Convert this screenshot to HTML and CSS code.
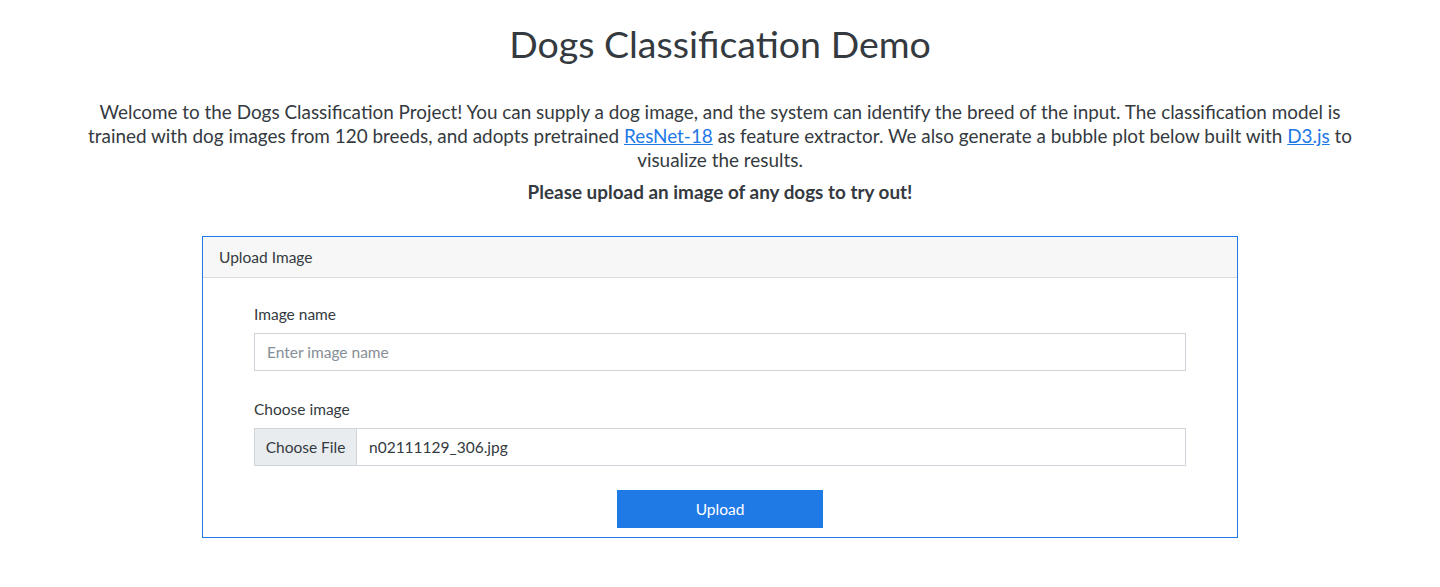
FILE: index.html
```html
<!DOCTYPE html>
<html lang="en">
<head>
<meta charset="utf-8">
<title>Dogs Classification Demo</title>
<link rel="stylesheet" href="styles.css">
</head>
<body>
<main class="page">
  <h1 class="title">Dogs Classification Demo</h1>
  <p class="intro">Welcome to the Dogs Classification Project! You can supply a dog image, and the system can identify the breed of the input. The classification model is trained with dog images from 120 breeds, and adopts pretrained <a href="#">ResNet-18</a> as feature extractor. We also generate a bubble plot below built with <a href="#">D3.js</a> to visualize the results.</p>
  <p class="cta">Please upload an image of any dogs to try out!</p>
  <section class="card">
    <div class="card-header">Upload Image</div>
    <form class="card-body">
      <div class="field">
        <label class="label">Image name</label>
        <input class="text-input" type="text" placeholder="Enter image name">
      </div>
      <div class="field">
        <label class="label">Choose image</label>
        <div class="file-input">
          <span class="file-btn">Choose File</span>
          <span class="file-name">n02111129_306.jpg</span>
        </div>
      </div>
      <div class="actions">
        <button class="upload-btn" type="button">Upload</button>
      </div>
    </form>
  </section>
</main>
</body>
</html>
```
FILE: styles.css
```css
* { box-sizing: border-box; }
html, body { margin: 0; padding: 0; background: #fff; }
body {
  font-family: "Lato", "Liberation Sans", sans-serif;
  color: #343a40;
}
.page {
  display: flex;
  flex-direction: column;
  align-items: center;
  padding-top: 19px;
}
.title {
  margin: 0;
  font-size: 37.5px;
  font-weight: 400;
  line-height: 50px;
  color: #343a40;
}
.intro {
  margin: 31px 0 0;
  width: 1276px;
  text-align: center;
  font-size: 18.9px;
  line-height: 24px;
}
.intro a { color: #1e78e6; }
.cta {
  margin: 8px 0 0;
  font-size: 18.9px;
  font-weight: 700;
  line-height: 24px;
}
.card {
  margin-top: 32px;
  width: 1036px;
  border: 1px solid #1e7be6;
}
.card-header {
  height: 41px;
  padding: 0 16px;
  display: flex;
  align-items: center;
  background: #f7f7f7;
  border-bottom: 1px solid #dcdcdc;
  font-size: 15.5px;
}
.card-body {
  padding: 26px 51px 9px;
  display: flex;
  flex-direction: column;
}
.field { display: flex; flex-direction: column; margin-bottom: 28px; }
.label { font-size: 15.5px; line-height: 20px; margin-bottom: 9px; }
.text-input {
  height: 38px;
  border: 1px solid #ced4da;
  padding: 0 12px;
  font-family: inherit;
  font-size: 15.5px;
  color: #343a40;
  outline: none;
}
.text-input::placeholder { color: #868e96; }
.file-input {
  height: 38px;
  border: 1px solid #ced4da;
  display: flex;
  align-items: stretch;
  font-size: 15.5px;
}
.file-btn {
  width: 102px;
  background: #e9ecef;
  border-right: 1px solid #ced4da;
  display: flex;
  align-items: center;
  justify-content: center;
}
.file-name { display: flex; align-items: center; padding-left: 12px; }
.actions { display: flex; justify-content: center; margin-top: -4px; }
.upload-btn {
  width: 206px;
  height: 38px;
  border: none;
  border-radius: 0;
  background: #1f7ae6;
  color: #fff;
  font-family: inherit;
  font-size: 15.5px;
}
```
